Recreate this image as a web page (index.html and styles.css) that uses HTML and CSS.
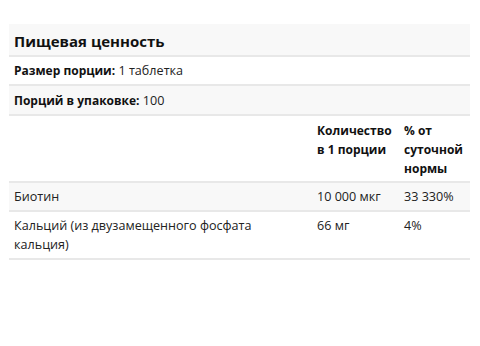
FILE: index.html
```html
<!DOCTYPE html>
<html lang="ru">
<head>
<meta charset="utf-8">
<link rel="stylesheet" href="styles.css">
</head>
<body>
<div class="panel">
  <table class="facts">
    <thead>
      <tr class="title-row"><th colspan="3" class="title">Пищевая ценность</th></tr>
    </thead>
    <tbody>
      <tr><td colspan="3"><b>Размер порции:</b> 1 таблетка</td></tr>
      <tr class="alt servings"><td colspan="3"><b>Порций в упаковке:</b> 100</td></tr>
      <tr class="head">
        <td class="c1"></td>
        <td class="c2"><b>Количество в 1 порции</b></td>
        <td class="c3"><b>% от суточной нормы</b></td>
      </tr>
      <tr class="alt">
        <td>Биотин</td>
        <td>10 000 мкг</td>
        <td>33 330%</td>
      </tr>
      <tr class="last">
        <td>Кальций (из двузамещенного фосфата кальция)</td>
        <td>66 мг</td>
        <td>4%</td>
      </tr>
    </tbody>
  </table>
</div>
</body>
</html>
```
FILE: styles.css
```css
html, body {
  margin: 0;
  padding: 0;
  background: #ffffff;
}
body {
  font-family: "Open Sans", "Liberation Sans", sans-serif;
  color: #222222;
}
.panel {
  padding: 24px 10px 0 9px;
}
.facts {
  width: 461px;
  border-collapse: collapse;
  font-size: 12.6px;
  line-height: 19px;
}
.facts td, .facts th {
  text-align: left;
  vertical-align: top;
  padding: 4px 5px 4px 5px;
  border-bottom: 2px solid #e8e8e8;
}
.facts b {
  font-weight: 700;
  font-size: 12px;
  line-height: 19px;
  color: #111111;
}
.title-row th {
  background: #f8f8f8;
  font-size: 15px;
  font-weight: 700;
  color: #111111;
  line-height: 20px;
  padding: 7px 5px 4px 5px;
}
.alt td {
  background: #f8f8f8;
}
.servings td {
  padding-top: 5px;
}
.c1 { width: 293px; }
.c2 { width: 77px; }
.c3 { width: 61px; }
.head td {
  padding-top: 5px;
  padding-bottom: 3px;
}
.last td {
  padding-bottom: 4px;
}
```
